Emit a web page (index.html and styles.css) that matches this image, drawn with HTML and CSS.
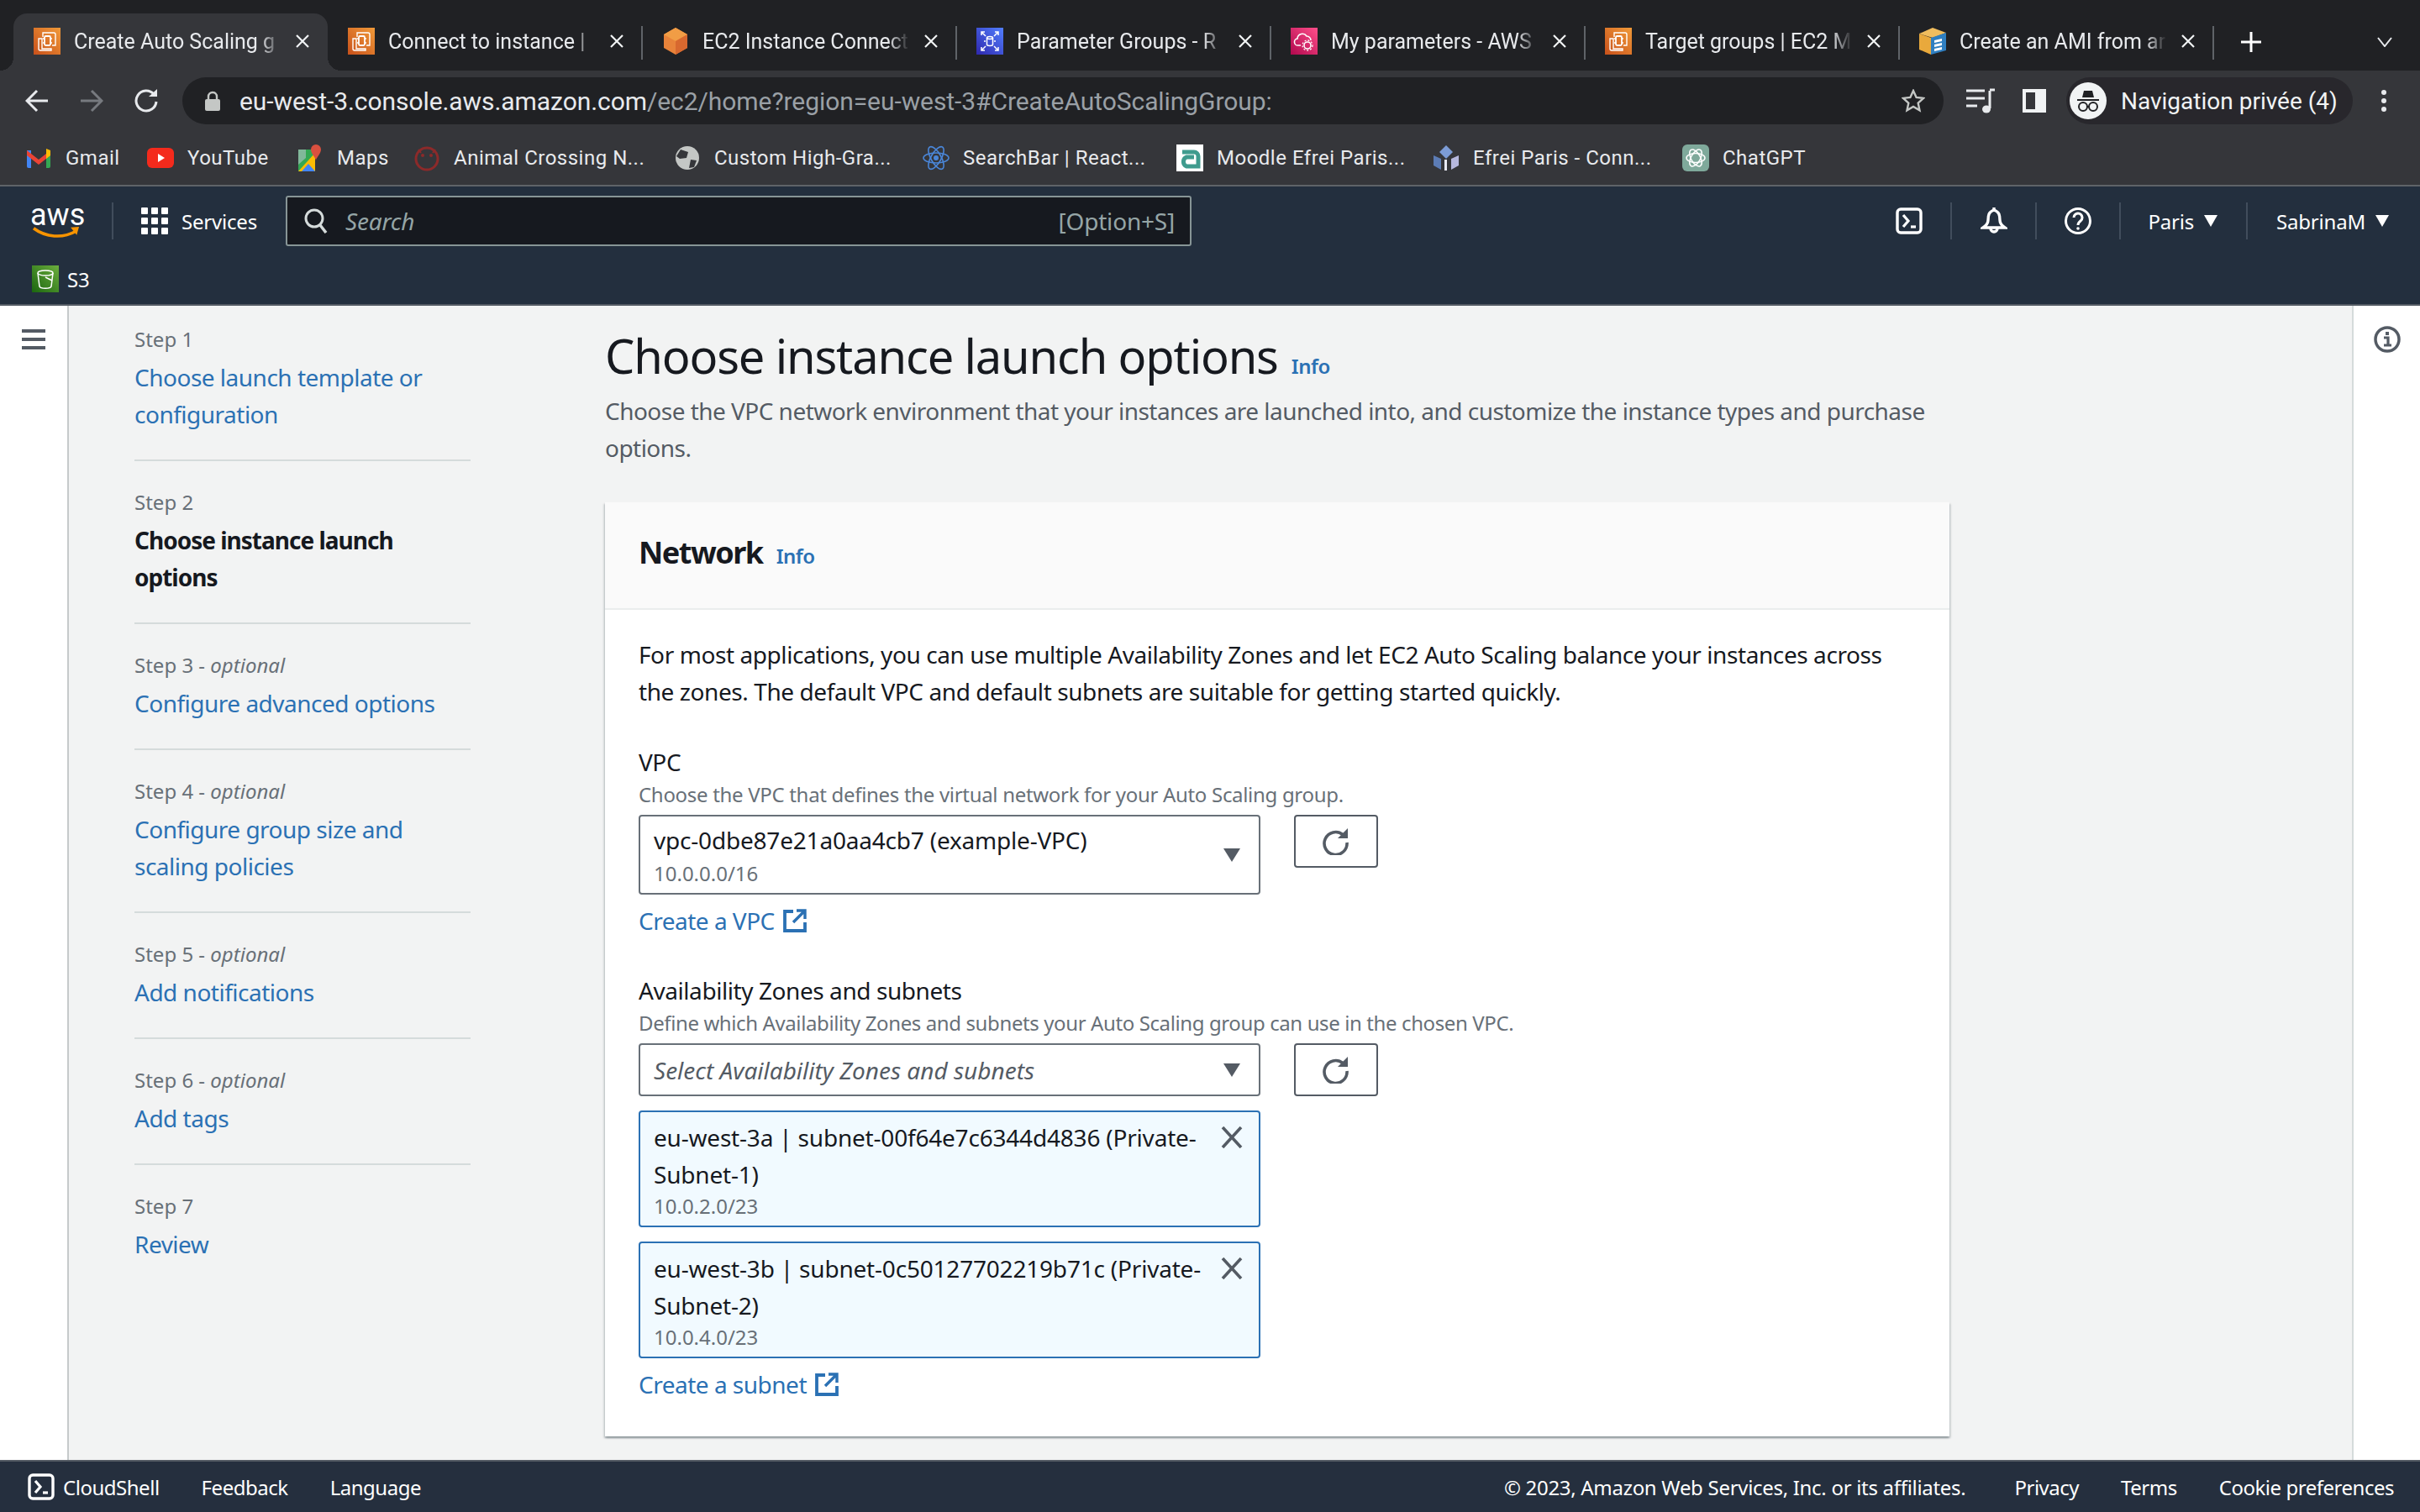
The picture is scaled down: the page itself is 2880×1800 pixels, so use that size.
FILE: index.html
```html
<!DOCTYPE html>
<html lang="en">
<head>
    <meta charset="UTF-8">
    <meta name="viewport" content="width=device-width, initial-scale=1.0">
    <title>Create Auto Scaling group</title>
    <link rel="stylesheet" href="styles.css">
</head>
<body>
    <!-- Shared icons -->
    <svg class="icon-defs" width="0" height="0">
        <defs>
            <linearGradient id="grad-orange" x1="0" y1="1" x2="1" y2="0"><stop offset="0" stop-color="#c8511b"/><stop offset="1" stop-color="#f19a39"/></linearGradient>
            <linearGradient id="grad-blue" x1="0" y1="1" x2="1" y2="0"><stop offset="0" stop-color="#2e27ad"/><stop offset="1" stop-color="#527fff"/></linearGradient>
            <linearGradient id="grad-pink" x1="0" y1="1" x2="1" y2="0"><stop offset="0" stop-color="#b0084d"/><stop offset="1" stop-color="#ff4f8b"/></linearGradient>
            <linearGradient id="grad-green" x1="0" y1="1" x2="1" y2="0"><stop offset="0" stop-color="#1b660f"/><stop offset="1" stop-color="#6cae3e"/></linearGradient>
            <symbol id="ico-ec2" viewBox="0 0 32 32">
                <rect width="32" height="32" fill="url(#grad-orange)"/>
                <path d="M11 11V6h13a2 2 0 0 1 2 2v13h-4M6 13h4v12h11v2H8a2 2 0 0 1-2-2z" fill="none" stroke="#fff" stroke-width="1.4"/>
                <rect x="13" y="10" width="7" height="11" rx="1.500" fill="none" stroke="#fff" stroke-width="1.800"/>
                <path d="M11 13h2M11 18h2M20 13h2M20 18h2" stroke="#fff" stroke-width="1.300"/>
            </symbol>
            <symbol id="ico-close" viewBox="0 0 16 16">
                <path d="M1 1l14 14M15 1L1 15" stroke="#f1f3f4" stroke-width="2.200"/>
            </symbol>
            <symbol id="ico-refresh" viewBox="0 0 34 32">
                <path d="M25 7.500A13.500 13.500 0 1 0 30 17" fill="none" stroke="currentColor" stroke-width="3.600"/>
                <path d="M19 12h12V0z" fill="currentColor"/>
            </symbol>
            <symbol id="ico-external" viewBox="0 0 28 28">
                <path d="M12 3H2v23h24V16" fill="none" stroke="currentColor" stroke-width="3.800"/>
                <path d="M16 2h10v10M25 3L12 16" fill="none" stroke="currentColor" stroke-width="3.400"/>
            </symbol>
            <symbol id="ico-shell" viewBox="0 0 32 32">
                <rect x="2" y="2" width="28" height="28" rx="4" fill="none" stroke="currentColor" stroke-width="3.400"/>
                <path d="M9 9l6 7-6 7" fill="none" stroke="currentColor" stroke-width="3.200"/>
                <path d="M18 23h6" stroke="currentColor" stroke-width="3.200"/>
            </symbol>
        </defs>
    </svg>

    <!-- Browser tabs -->
    <div class="tabstrip">
        <div class="tab tab-active">
            <svg class="favicon"><use href="#ico-ec2"/></svg>
            <span class="tab-title">Create Auto Scaling g</span>
            <svg class="tab-close"><use href="#ico-close"/></svg>
        </div>
        <div class="tab">
            <svg class="favicon"><use href="#ico-ec2"/></svg>
            <span class="tab-title">Connect to instance |</span>
            <svg class="tab-close"><use href="#ico-close"/></svg>
        </div>
        <div class="tab">
            <svg class="favicon" viewBox="0 0 32 32"><path d="M16 0l14 8v16l-14 8-14-8V8z" fill="#e8833a"/><path d="M16 0l14 8-14 8L2 8z" fill="#f19d45"/><path d="M16 16l14-8v16l-14 8z" fill="#d8682f"/></svg>
            <span class="tab-title">EC2 Instance Connect</span>
            <svg class="tab-close"><use href="#ico-close"/></svg>
        </div>
        <div class="tab">
            <svg class="favicon" viewBox="0 0 32 32"><rect width="32" height="32" fill="url(#grad-blue)"/><path d="M6 9V5h4M26 9V5h-4M6 23v4h4M26 23v4h-4M6 5l5 5M26 5l-5 5M6 27l5-5M26 27l-5-5" fill="none" stroke="#fff" stroke-width="1.500"/><ellipse cx="16" cy="12" rx="3.500" ry="1.500" fill="none" stroke="#fff" stroke-width="1.500"/><path d="M12.500 12v8c0 2 7 2 7 0v-8M9 16h2M21 16h2" fill="none" stroke="#fff" stroke-width="1.500"/></svg>
            <span class="tab-title">Parameter Groups - R</span>
            <svg class="tab-close"><use href="#ico-close"/></svg>
        </div>
        <div class="tab">
            <svg class="favicon" viewBox="0 0 32 32"><rect width="32" height="32" fill="url(#grad-pink)"/><path d="M12 21H9a4 4 0 0 1-1-8 6 6 0 0 1 11-3 5 5 0 0 1 5 5" fill="none" stroke="#fff" stroke-width="1.600"/><circle cx="20" cy="21" r="4" fill="none" stroke="#fff" stroke-width="1.600"/><circle cx="20" cy="21" r="6" fill="none" stroke="#fff" stroke-width="1.300" stroke-dasharray="2 2"/></svg>
            <span class="tab-title">My parameters - AWS</span>
            <svg class="tab-close"><use href="#ico-close"/></svg>
        </div>
        <div class="tab">
            <svg class="favicon"><use href="#ico-ec2"/></svg>
            <span class="tab-title">Target groups | EC2 M</span>
            <svg class="tab-close"><use href="#ico-close"/></svg>
        </div>
        <div class="tab">
            <svg class="favicon" viewBox="0 0 32 32"><path d="M0 7l14 5v20L0 26z" fill="#e9a93c"/><path d="M16 0l16 6-16 6L0 7z" fill="#f0bd5e"/><path d="M14 12l18-6v21l-18 5z" fill="#2f7fc1"/><path d="M18 15l9-2v3l-9 2zM18 20l9-2v3l-9 2zM18 25l9-2v3l-9 2z" fill="#fff"/></svg>
            <span class="tab-title">Create an AMI from ar</span>
            <svg class="tab-close"><use href="#ico-close"/></svg>
        </div>
        <svg class="tab-new" viewBox="0 0 24 24"><path d="M12 0v24M0 12h24" stroke="#fff" stroke-width="3"/></svg>
        <svg class="tab-chevron" viewBox="0 0 18 12"><path d="M1 1l8 10 8-10" fill="none" stroke="#e8eaed" stroke-width="2"/></svg>
    </div>

    <!-- Browser toolbar -->
    <div class="toolbar">
        <svg class="tool-btn" viewBox="0 0 28 28"><path d="M27 14H3M14 2L2 14l12 12" fill="none" stroke="#e8eaed" stroke-width="3"/></svg>
        <svg class="tool-btn" viewBox="0 0 28 28"><path d="M1 14h24M14 2l12 12-12 12" fill="none" stroke="#777a7f" stroke-width="3"/></svg>
        <svg class="tool-btn" viewBox="0 0 28 28"><path d="M23 6a12 12 0 1 0 3 9" fill="none" stroke="#e8eaed" stroke-width="3"/><path d="M17 9h10V0z" fill="#e8eaed"/></svg>
        <div class="omnibox">
            <svg class="omni-lock" viewBox="0 0 18 24"><path d="M4 11V7a5 5 0 0 1 10 0v4" fill="none" stroke="#c4c7c5" stroke-width="2.400"/><rect y="10" width="18" height="14" rx="2" fill="#c4c7c5"/></svg>
            <span class="omni-url">eu-west-3.console.aws.amazon.com<span class="omni-path">/ec2/home?region=eu-west-3#CreateAutoScalingGroup:</span></span>
            <svg class="omni-star" viewBox="0 0 28 28"><path d="M14 2l3.600 8 8.400.9-6.300 5.800 1.800 8.600L14 20.900l-7.500 4.400 1.800-8.600L2 10.900l8.400-.9z" fill="none" stroke="#c4c7c5" stroke-width="2.400"/></svg>
        </div>
        <svg class="tool-media" viewBox="0 0 34 30"><path d="M0 3h22M0 12h22M0 21h13" stroke="#e8eaed" stroke-width="3"/><path d="M28 3v21" stroke="#e8eaed" stroke-width="3"/><path d="M28 2h6" stroke="#e8eaed" stroke-width="3"/><ellipse cx="24" cy="25" rx="5" ry="4.500" fill="#e8eaed"/></svg>
        <svg class="tool-panel" viewBox="0 0 28 28"><rect x="2" y="2" width="24" height="24" fill="none" stroke="#f1f3f4" stroke-width="4"/><rect x="15" y="2" width="11" height="24" fill="#f1f3f4"/></svg>
        <div class="incognito">
            <span class="incognito-avatar">
                <svg viewBox="0 0 32 32" width="32" height="32"><path d="M9 12l2-8h10l2 8zM3 14h26v2H3z" fill="#202124"/><circle cx="10" cy="23" r="5" fill="none" stroke="#202124" stroke-width="2"/><circle cx="22" cy="23" r="5" fill="none" stroke="#202124" stroke-width="2"/><path d="M15 23h2" stroke="#202124" stroke-width="2"/></svg>
            </span>
            <span class="incognito-label">Navigation privée (4)</span>
        </div>
        <svg class="tool-dots" viewBox="0 0 8 28"><circle cx="4" cy="4" r="3" fill="#e8eaed"/><circle cx="4" cy="14" r="3" fill="#e8eaed"/><circle cx="4" cy="24" r="3" fill="#e8eaed"/></svg>
    </div>

    <!-- Bookmarks -->
    <div class="bookmarks">
        <div class="bookmark bm-gmail">
            <svg viewBox="0 0 32 32"><path d="M2 7h5v21H4a2 2 0 0 1-2-2z" fill="#4285f4"/><path d="M25 7h5v19a2 2 0 0 1-2 2h-3z" fill="#34a853"/><path d="M2 7l14 11L30 7v6L16 24 2 13z" fill="#ea4335"/><path d="M25 5l5 2v6l-5 4z" fill="#fbbc04"/></svg>
            <span>Gmail</span>
        </div>
        <div class="bookmark bm-youtube">
            <svg viewBox="0 0 32 32"><rect y="4" width="32" height="24" rx="6" fill="#f42a1c"/><path d="M13 11l8 5-8 5z" fill="#fff"/></svg>
            <span>YouTube</span>
        </div>
        <div class="bookmark bm-maps">
            <svg viewBox="0 0 28 32"><path d="M0 6h20v26H0z" fill="#34a853"/><path d="M0 32L20 10v22z" fill="#fbbc04"/><path d="M4 32l8-9 8 9z" fill="#4285f4"/><path d="M0 6h9v10L0 24z" fill="#81b89a"/><path d="M21 0a6 6 0 0 1 6 6c0 5-6 10-6 13 0-3-6-8-6-13a6 6 0 0 1 6-6z" fill="#d9503f"/></svg>
            <span>Maps</span>
        </div>
        <div class="bookmark bm-animal">
            <svg viewBox="0 0 32 32"><circle cx="16" cy="17" r="13" fill="none" stroke="#8c2a2a" stroke-width="3"/><circle cx="11" cy="13" r="2" fill="#8c2a2a"/><circle cx="21" cy="13" r="2" fill="#8c2a2a"/><path d="M6 6l3 4M26 6l-3 4" stroke="#8c2a2a" stroke-width="2"/></svg>
            <span>Animal Crossing N...</span>
        </div>
        <div class="bookmark bm-custom">
            <svg viewBox="0 0 32 32"><circle cx="16" cy="16" r="14" fill="#c4c7c5"/><path d="M8 6l9 3-2 7-8 1-4-3zM20 18l7 1-3 8-6 1z" fill="#35363a"/></svg>
            <span>Custom High-Gra...</span>
        </div>
        <div class="bookmark bm-search">
            <svg viewBox="0 0 32 32"><g fill="none" stroke="#4a86d8" stroke-width="1.600"><ellipse cx="16" cy="16" rx="15" ry="6"/><ellipse cx="16" cy="16" rx="15" ry="6" transform="rotate(60 16 16)"/><ellipse cx="16" cy="16" rx="15" ry="6" transform="rotate(120 16 16)"/></g><circle cx="16" cy="16" r="3" fill="#4a86d8"/></svg>
            <span>SearchBar | React...</span>
        </div>
        <div class="bookmark bm-moodle">
            <svg viewBox="0 0 32 32"><rect width="32" height="32" fill="#fff"/><path d="M7 9h14a5 5 0 0 1 5 5v12H12a6 6 0 0 1 0-11h9" fill="none" stroke="#3f9b8e" stroke-width="5"/></svg>
            <span>Moodle Efrei Paris...</span>
        </div>
        <div class="bookmark bm-efrei">
            <svg viewBox="0 0 32 32"><path d="M16 1l8 8-8 8-8-8z" fill="#7c9cd6"/><path d="M1 13l9 4v13l-9-5z" fill="#5c7cb5"/><path d="M31 13l-9 4v13l9-5z" fill="#b6b8de"/><path d="M14 18h3v13h-3z" fill="#e8eaf4"/></svg>
            <span>Efrei Paris - Conn...</span>
        </div>
        <div class="bookmark bm-gpt">
            <svg viewBox="0 0 32 32"><rect width="32" height="32" rx="6" fill="#7fa99b"/><g fill="none" stroke="#fff" stroke-width="1.500"><ellipse cx="16" cy="16" rx="11" ry="5.500"/><ellipse cx="16" cy="16" rx="11" ry="5.500" transform="rotate(60 16 16)"/><ellipse cx="16" cy="16" rx="11" ry="5.500" transform="rotate(120 16 16)"/></g></svg>
            <span>ChatGPT</span>
        </div>
    </div>

    <!-- AWS console header -->
    <header class="console-nav">
        <div class="nav-main">
            <div class="aws-logo">
                <span class="aws-word">aws</span>
                <svg class="aws-smile" viewBox="0 0 62 20"><path d="M1 3c16 12 38 14 56 4" fill="none" stroke="#f79400" stroke-width="4"/><path d="M50 2l11-1-3 11z" fill="#f79400"/></svg>
            </div>
            <div class="nav-sep sep-logo"></div>
            <svg class="nav-grid" viewBox="0 0 32 32" fill="#fff"><rect width="8" height="8" rx="1"/><rect x="12" width="8" height="8" rx="1"/><rect x="24" width="8" height="8" rx="1"/><rect y="12" width="8" height="8" rx="1"/><rect x="12" y="12" width="8" height="8" rx="1"/><rect x="24" y="12" width="8" height="8" rx="1"/><rect y="24" width="8" height="8" rx="1"/><rect x="12" y="24" width="8" height="8" rx="1"/><rect x="24" y="24" width="8" height="8" rx="1"/></svg>
            <span class="nav-text nav-services">Services</span>
            <div class="nav-search">
                <svg class="search-icon" viewBox="0 0 28 30"><circle cx="12" cy="12" r="10" fill="none" stroke="#d5dbdb" stroke-width="3"/><path d="M19 20l7 9" stroke="#d5dbdb" stroke-width="3.500"/></svg>
                <span class="search-text">Search</span>
                <span class="search-key">[Option+S]</span>
            </div>
            <div class="nav-right">
                <svg class="nav-icon nav-shell"><use href="#ico-shell"/></svg>
                <div class="nav-sep sep-a"></div>
                <svg class="nav-icon nav-bell" viewBox="0 0 32 32"><path d="M16 3c-6 2-7 6-7 12 0 4-3 7-6 9h26c-3-2-6-5-6-9 0-6-1-10-7-12z" fill="none" stroke="#fff" stroke-width="3.400"/><path d="M16 0v3M12 25a4 4 0 0 0 8 0" fill="none" stroke="#fff" stroke-width="3.400"/></svg>
                <div class="nav-sep sep-b"></div>
                <svg class="nav-icon nav-help" viewBox="0 0 32 32"><circle cx="16" cy="16" r="14.500" fill="none" stroke="#fff" stroke-width="3"/><path d="M11 12a5 5 0 1 1 8 4c-2 1.500-3 2.500-3 5" fill="none" stroke="#fff" stroke-width="3"/><circle cx="16" cy="25" r="1.800" fill="#fff"/></svg>
                <div class="nav-sep sep-c"></div>
                <span class="nav-text nav-region">Paris</span>
                <span class="caret caret-white nav-caret"></span>
                <div class="nav-sep sep-d"></div>
                <span class="nav-text nav-user">SabrinaM</span>
                <span class="caret caret-white nav-caret"></span>
            </div>
        </div>
        <div class="nav-fav">
            <svg class="s3-icon" viewBox="0 0 32 32"><rect width="32" height="32" fill="url(#grad-green)"/><ellipse cx="16" cy="9" rx="9" ry="3" fill="none" stroke="#fff" stroke-width="1.500"/><path d="M7 9l2 16c1 3 13 3 14 0l2-16M16 14l8 4" fill="none" stroke="#fff" stroke-width="1.500"/></svg>
            <span class="nav-text">S3</span>
        </div>
    </header>

    <!-- Console body -->
    <div class="console-body">
        <aside class="rail-left">
            <svg class="hamburger" viewBox="0 0 28 24"><path d="M0 2h28M0 12h28M0 22h28" stroke="#545b64" stroke-width="4"/></svg>
        </aside>

        <nav class="wizard">
            <div class="step">
                <div class="step-label">Step 1</div>
                <a class="step-link">Choose launch template or configuration</a>
            </div>
            <div class="step">
                <div class="step-label">Step 2</div>
                <div class="step-current">Choose instance launch options</div>
            </div>
            <div class="step">
                <div class="step-label">Step 3 - <em>optional</em></div>
                <a class="step-link">Configure advanced options</a>
            </div>
            <div class="step">
                <div class="step-label">Step 4 - <em>optional</em></div>
                <a class="step-link">Configure group size and scaling policies</a>
            </div>
            <div class="step">
                <div class="step-label">Step 5 - <em>optional</em></div>
                <a class="step-link">Add notifications</a>
            </div>
            <div class="step">
                <div class="step-label">Step 6 - <em>optional</em></div>
                <a class="step-link">Add tags</a>
            </div>
            <div class="step step-last">
                <div class="step-label">Step 7</div>
                <a class="step-link">Review</a>
            </div>
        </nav>

        <main class="content">
            <div class="page-head">
                <h1 class="page-title">Choose instance launch options</h1>
                <a class="info-link">Info</a>
            </div>
            <p class="page-desc">Choose the VPC network environment that your instances are launched into, and customize the instance types and purchase options.</p>

            <section class="card">
                <div class="card-head">
                    <h2 class="card-title">Network</h2>
                    <a class="info-link">Info</a>
                </div>
                <div class="card-body">
                    <p class="card-intro">For most applications, you can use multiple Availability Zones and let EC2 Auto Scaling balance your instances across the zones. The default VPC and default subnets are suitable for getting started quickly.</p>

                    <div class="field">
                        <div class="field-label">VPC</div>
                        <div class="field-hint">Choose the VPC that defines the virtual network for your Auto Scaling group.</div>
                        <div class="field-row">
                            <div class="select select-tall">
                                <div>
                                    <div class="select-value">vpc-0dbe87e21a0aa4cb7 (example-VPC)</div>
                                    <div class="select-sub">10.0.0.0/16</div>
                                </div>
                                <span class="caret caret-dark"></span>
                            </div>
                            <button class="refresh-btn"><svg class="refresh-icon"><use href="#ico-refresh"/></svg></button>
                        </div>
                        <a class="create-link">Create a VPC <svg class="external-icon"><use href="#ico-external"/></svg></a>
                    </div>

                    <div class="field field-zones">
                        <div class="field-label">Availability Zones and subnets</div>
                        <div class="field-hint">Define which Availability Zones and subnets your Auto Scaling group can use in the chosen VPC.</div>
                        <div class="field-row">
                            <div class="select">
                                <span class="select-placeholder">Select Availability Zones and subnets</span>
                                <span class="caret caret-dark"></span>
                            </div>
                            <button class="refresh-btn"><svg class="refresh-icon"><use href="#ico-refresh"/></svg></button>
                        </div>
                        <div class="token">
                            <div class="token-text">
                                <div class="select-value">eu-west-3a | subnet-00f64e7c6344d4836 (Private-Subnet-1)</div>
                                <div class="select-sub">10.0.2.0/23</div>
                            </div>
                            <svg class="token-close" viewBox="0 0 26 26"><path d="M2 1l22 24M24 1L2 25" stroke="#545b64" stroke-width="3.600"/></svg>
                        </div>
                        <div class="token">
                            <div class="token-text">
                                <div class="select-value">eu-west-3b | subnet-0c50127702219b71c (Private-Subnet-2)</div>
                                <div class="select-sub">10.0.4.0/23</div>
                            </div>
                            <svg class="token-close" viewBox="0 0 26 26"><path d="M2 1l22 24M24 1L2 25" stroke="#545b64" stroke-width="3.600"/></svg>
                        </div>
                        <a class="create-link">Create a subnet <svg class="external-icon"><use href="#ico-external"/></svg></a>
                    </div>
                </div>
            </section>
        </main>

        <aside class="rail-right">
            <svg class="info-circle" viewBox="0 0 32 32"><circle cx="16" cy="16" r="14" fill="none" stroke="#545b64" stroke-width="3.500"/><rect x="14" y="7" width="4" height="4" fill="#545b64"/><path d="M12 14h5v9M12 23h9" fill="none" stroke="#545b64" stroke-width="3.200"/></svg>
        </aside>
    </div>

    <!-- Console footer -->
    <footer class="console-footer">
        <svg class="footer-shell"><use href="#ico-shell"/></svg>
        <span class="footer-item footer-cloud">CloudShell</span>
        <span class="footer-item footer-feedback">Feedback</span>
        <span class="footer-item">Language</span>
        <span class="footer-item footer-copy">© 2023, Amazon Web Services, Inc. or its affiliates.</span>
        <span class="footer-item footer-link">Privacy</span>
        <span class="footer-item footer-link">Terms</span>
        <span class="footer-item footer-link">Cookie preferences</span>
    </footer>
</body>
</html>
```

FILE: styles.css
```css
* {
    box-sizing: border-box;
}

html, body {
    height: 100%;
}

body {
    margin: 0;
    width: 2880px;
    height: 1800px;
    overflow: hidden;
    display: flex;
    flex-direction: column;
    font-family: "Noto Sans", Arial, sans-serif;
    color: #16191f;
    background: #f2f3f3;
}

.icon-defs {
    position: absolute;
}

/* Browser tabs */
.tabstrip {
    height: 84px;
    flex: none;
    background: #202124;
    display: flex;
    align-items: flex-end;
    padding-left: 16px;
    font-family: Roboto, Arial, sans-serif;
}

.tab {
    width: 374px;
    height: 68px;
    flex: none;
    display: flex;
    align-items: center;
    padding: 0 0 2px 24px;
    position: relative;
    color: #e8eaed;
}

.tab::after {
    content: "";
    position: absolute;
    right: -1px;
    top: 15px;
    height: 40px;
    width: 2px;
    background: #5f6368;
}

.tab-active {
    background: #35363a;
    border-radius: 16px 16px 0 0;
}

/* flared corners at the foot of the active tab */
.tab-active::before {
    content: "";
    position: absolute;
    left: -16px;
    bottom: 0;
    width: 16px;
    height: 16px;
    background: radial-gradient(circle at 0 0, transparent 16px, #35363a 16px);
}

.tab-active::after {
    right: -16px;
    top: auto;
    bottom: 0;
    width: 16px;
    height: 16px;
    background: radial-gradient(circle at 100% 0, transparent 16px, #35363a 16px);
}

.favicon {
    width: 32px;
    height: 32px;
    flex: none;
}

.tab-title {
    width: 246px;
    margin-left: 16px;
    font-size: 25px;
    white-space: nowrap;
    overflow: hidden;
    -webkit-mask-image: linear-gradient(to right, #000 90%, transparent);
    mask-image: linear-gradient(to right, #000 90%, transparent);
}

.tab-close {
    width: 16px;
    height: 16px;
    margin-left: 18px;
    flex: none;
}

.tab-new {
    width: 24px;
    height: 24px;
    margin: 0 0 22px 33px;
    flex: none;
}

.tab-chevron {
    width: 18px;
    height: 12px;
    margin: 0 0 28px 138px;
    flex: none;
}

/* Browser toolbar */
.toolbar {
    height: 64px;
    flex: none;
    background: #35363a;
    display: flex;
    align-items: flex-end;
    padding-left: 30px;
}

.tool-btn {
    width: 28px;
    height: 28px;
    margin: 0 37px 14px 0;
    flex: none;
}

.omnibox {
    width: 2096px;
    height: 56px;
    margin-left: -8px;
    flex: none;
    display: flex;
    align-items: center;
    background: #202124;
    border-radius: 28px;
    padding: 0 22px 0 27px;
    font-family: Roboto, Arial, sans-serif;
}

.omni-lock {
    width: 18px;
    height: 24px;
    flex: none;
}

.omni-url {
    margin-left: 23px;
    font-size: 30px;
    letter-spacing: -0.07px;
    color: #e8eaed;
    white-space: nowrap;
}

.omni-path {
    color: #9aa0a6;
}

.omni-star {
    width: 28px;
    height: 28px;
    margin-left: auto;
}

.tool-media {
    width: 34px;
    height: 30px;
    margin: 0 0 13px 27px;
    flex: none;
}

.tool-panel {
    width: 28px;
    height: 28px;
    margin: 0 0 14px 33px;
    flex: none;
}

.incognito {
    width: 341px;
    height: 56px;
    margin-left: 24px;
    flex: none;
    display: flex;
    align-items: center;
    padding-left: 4px;
    background: #28272c;
    border-radius: 28px;
    font-family: Roboto, Arial, sans-serif;
}

.incognito-avatar {
    width: 44px;
    height: 44px;
    flex: none;
    display: flex;
    align-items: center;
    justify-content: center;
    border-radius: 50%;
    background: #f1f3f4;
}

.incognito-label {
    margin-left: 17px;
    font-size: 28px;
    color: #f1f3f4;
    white-space: nowrap;
}

.tool-dots {
    width: 8px;
    height: 28px;
    margin: 0 0 14px 33px;
    flex: none;
}

/* Bookmarks */
.bookmarks {
    height: 74px;
    flex: none;
    background: #35363a;
    border-bottom: 2px solid #5f6368;
    display: flex;
    align-items: center;
    padding: 8px 0 0 30px;
    font-family: Roboto, Arial, sans-serif;
    font-size: 24px;
    letter-spacing: 0.5px;
    color: #e8eaed;
}

.bookmark {
    display: flex;
    align-items: center;
    white-space: nowrap;
}

.bookmark svg {
    width: 32px;
    height: 32px;
    flex: none;
    margin-right: 16px;
}

.bm-gmail { width: 145px; }
.bm-youtube { width: 178px; }
.bm-maps { width: 139px; }
.bm-animal { width: 310px; }
.bm-custom { width: 296px; }
.bm-search { width: 302px; }
.bm-moodle { width: 305px; }
.bm-efrei { width: 297px; }

/* AWS console header */
.console-nav {
    height: 142px;
    flex: none;
    background: #232f3e;
    border-bottom: 2px solid #545b64;
    color: #fff;
}

.nav-main {
    height: 74px;
    display: flex;
    align-items: center;
    padding: 8px 0 0 36px;
    position: relative;
}

.aws-logo {
    width: 62px;
    height: 44px;
    flex: none;
    position: relative;
}

.aws-word {
    display: block;
    font-family: Roboto, Arial, sans-serif;
    font-size: 36px;
    line-height: 30px;
    text-align: center;
}

.aws-smile {
    width: 62px;
    height: 18px;
    display: block;
    margin-top: -2px;
}

.nav-sep {
    width: 2px;
    height: 44px;
    flex: none;
    background: #414d5c;
}

.sep-logo { margin-left: 35px; }

.nav-grid {
    width: 32px;
    height: 32px;
    margin-left: 33px;
    flex: none;
}

.nav-text {
    font-size: 24px;
    letter-spacing: -0.2px;
    white-space: nowrap;
}

.nav-services {
    margin-left: 16px;
    width: 106px;
}

.nav-search {
    width: 1078px;
    height: 60px;
    margin-left: 18px;
    flex: none;
    display: flex;
    align-items: center;
    padding: 0 18px 0 20px;
    background: #16191f;
    border: 2px solid #879596;
    border-radius: 3px;
    font-size: 28px;
    letter-spacing: -0.2px;
    color: #95a5a6;
}

.search-icon {
    width: 28px;
    height: 30px;
    flex: none;
}

.search-text {
    margin-left: 21px;
    font-style: italic;
}

.search-key {
    margin-left: auto;
}

.nav-right {
    margin-left: auto;
    display: flex;
    align-items: center;
    padding-right: 37px;
}

.nav-icon {
    width: 32px;
    height: 32px;
    flex: none;
}

.nav-shell { margin-right: 33px; }
.sep-a { margin-right: 34px; }
.nav-bell { margin-right: 33px; }
.sep-b { margin-right: 33px; }
.nav-help { margin-right: 33px; }
.sep-c { margin-right: 32px; }
.sep-d { margin: 0 34px; }
.nav-caret { margin-left: 12px; }

.caret {
    width: 0;
    height: 0;
    flex: none;
    border-style: solid;
    border-width: 16px 10px 0 10px;
    border-color: #fff transparent transparent transparent;
}

.caret-white {
    border-width: 14px 8px 0 8px;
}

.caret-dark {
    border-color: #545b64 transparent transparent transparent;
}

.nav-fav {
    height: 66px;
    display: flex;
    align-items: center;
    padding: 6px 0 0 38px;
}

.s3-icon {
    width: 32px;
    height: 32px;
    margin-right: 10px;
}

/* Console body */
.console-body {
    flex: 1;
    min-height: 0;
    display: flex;
    overflow: hidden;
}

.rail-left {
    width: 82px;
    flex: none;
    background: #fff;
    border-right: 2px solid #c6cacb;
    padding: 28px 0 0 26px;
}

.hamburger {
    width: 28px;
    height: 24px;
    display: block;
}

.wizard {
    width: 400px;
    margin-left: 78px;
    flex: none;
    padding-top: 22px;
}

.step {
    border-bottom: 2px solid #d5dbdb;
    padding-bottom: 32px;
    margin-bottom: 31px;
}

.step-last {
    border-bottom: none;
}

.step-label {
    font-size: 24px;
    line-height: 36px;
    margin-bottom: 5px;
    color: #687078;
}

.step-link, .step-current {
    display: block;
    font-size: 28px;
    line-height: 44px;
    letter-spacing: -0.5px;
}

.step-link {
    color: #2b71b4;
}

.step-current {
    font-weight: 700;
    letter-spacing: -1px;
    color: #16191f;
}

.content {
    width: 1600px;
    margin-left: 160px;
    flex: none;
    padding-top: 25px;
}

.page-head {
    display: flex;
    align-items: baseline;
}

.page-title {
    margin: 0;
    font-size: 56px;
    font-weight: 400;
    line-height: 68px;
    letter-spacing: -1.15px;
}

.info-link {
    margin-left: 16px;
    font-size: 24px;
    font-weight: 600;
    letter-spacing: -0.5px;
    color: #2b71b4;
}

.page-desc {
    margin: 10px 0 43px;
    font-size: 28px;
    line-height: 44px;
    letter-spacing: -0.53px;
    color: #545b64;
}

.card {
    background: #fff;
    box-shadow: 0 2px 2px 0 rgba(0, 28, 36, 0.3), 2px 2px 2px 0 rgba(0, 28, 36, 0.1), -2px 2px 2px 0 rgba(0, 28, 36, 0.1);
}

.card-head {
    height: 128px;
    display: flex;
    align-items: baseline;
    padding: 36px 40px 0;
    background: #fafafa;
    border-bottom: 2px solid #eaeded;
}

.card-title {
    margin: 0;
    font-size: 36px;
    font-weight: 700;
    line-height: 48px;
    letter-spacing: -1.5px;
}

.card-body {
    padding: 31px 40px 40px;
}

.card-intro {
    margin: 0;
    font-size: 28px;
    line-height: 44px;
    letter-spacing: -0.42px;
}

.field {
    margin-top: 42px;
}

.field-zones {
    margin-top: 41px;
}

.field-label {
    font-size: 28px;
    line-height: 40px;
    letter-spacing: -0.43px;
}

.field-hint {
    margin: 1px 0 6px;
    font-size: 24px;
    line-height: 36px;
    letter-spacing: -0.31px;
    color: #687078;
}

.field-zones .field-hint {
    letter-spacing: -0.39px;
}

.field-row {
    display: flex;
    align-items: flex-start;
    gap: 40px;
}

.select {
    width: 740px;
    height: 63px;
    flex: none;
    display: flex;
    align-items: center;
    justify-content: space-between;
    padding: 0 22px 0 16px;
    background: #fff;
    border: 2px solid #687078;
    border-radius: 4px;
}

.select-tall {
    height: 95px;
}

.select-value {
    font-size: 28px;
    line-height: 44px;
    letter-spacing: -0.2px;
}

.select-sub {
    font-size: 24px;
    line-height: 36px;
    color: #687078;
}

.token .select-sub {
    margin-top: -2px;
}

.select-placeholder {
    font-size: 28px;
    font-style: italic;
    color: #545b64;
}

.refresh-btn {
    width: 100px;
    height: 63px;
    flex: none;
    display: flex;
    align-items: center;
    justify-content: center;
    padding: 0;
    background: #fff;
    border: 2px solid #545b64;
    border-radius: 4px;
    color: #545b64;
}

.refresh-icon {
    width: 34px;
    height: 32px;
}

.create-link {
    display: flex;
    align-items: center;
    margin-top: 9px;
    font-size: 28px;
    line-height: 44px;
    letter-spacing: -0.5px;
    color: #2b71b4;
}

.external-icon {
    width: 28px;
    height: 28px;
    margin-left: 10px;
}

.token {
    width: 740px;
    height: 139px;
    margin-top: 17px;
    display: flex;
    justify-content: space-between;
    align-items: flex-start;
    padding: 8px 19px 0 16px;
    background: #f1faff;
    border: 2px solid #2b71b4;
    border-radius: 4px;
}

.token-text {
    width: 665px;
}

.token-close {
    width: 26px;
    height: 26px;
    margin-top: 9px;
    flex: none;
}

.rail-right {
    width: 81px;
    margin-left: auto;
    flex: none;
    background: #fff;
    border-left: 2px solid #d5dbdb;
    padding: 24px 0 0 24px;
}

.info-circle {
    width: 32px;
    height: 32px;
    display: block;
}

/* Console footer */
.console-footer {
    height: 62px;
    flex: none;
    display: flex;
    align-items: center;
    padding: 0 31px 0 33px;
    background: #252f3e;
    border-top: 2px solid #545b64;
    color: #fff;
    font-size: 24px;
    letter-spacing: -0.48px;
    white-space: nowrap;
}

.footer-shell {
    width: 32px;
    height: 32px;
    margin-right: 10px;
}

.footer-cloud { margin-right: 50px; }
.footer-feedback { margin-right: 50px; }
.footer-copy { margin-left: auto; letter-spacing: -0.3px; }
.footer-link { margin-left: 50px; }
.footer-copy + .footer-link { margin-left: 58px; }
```
